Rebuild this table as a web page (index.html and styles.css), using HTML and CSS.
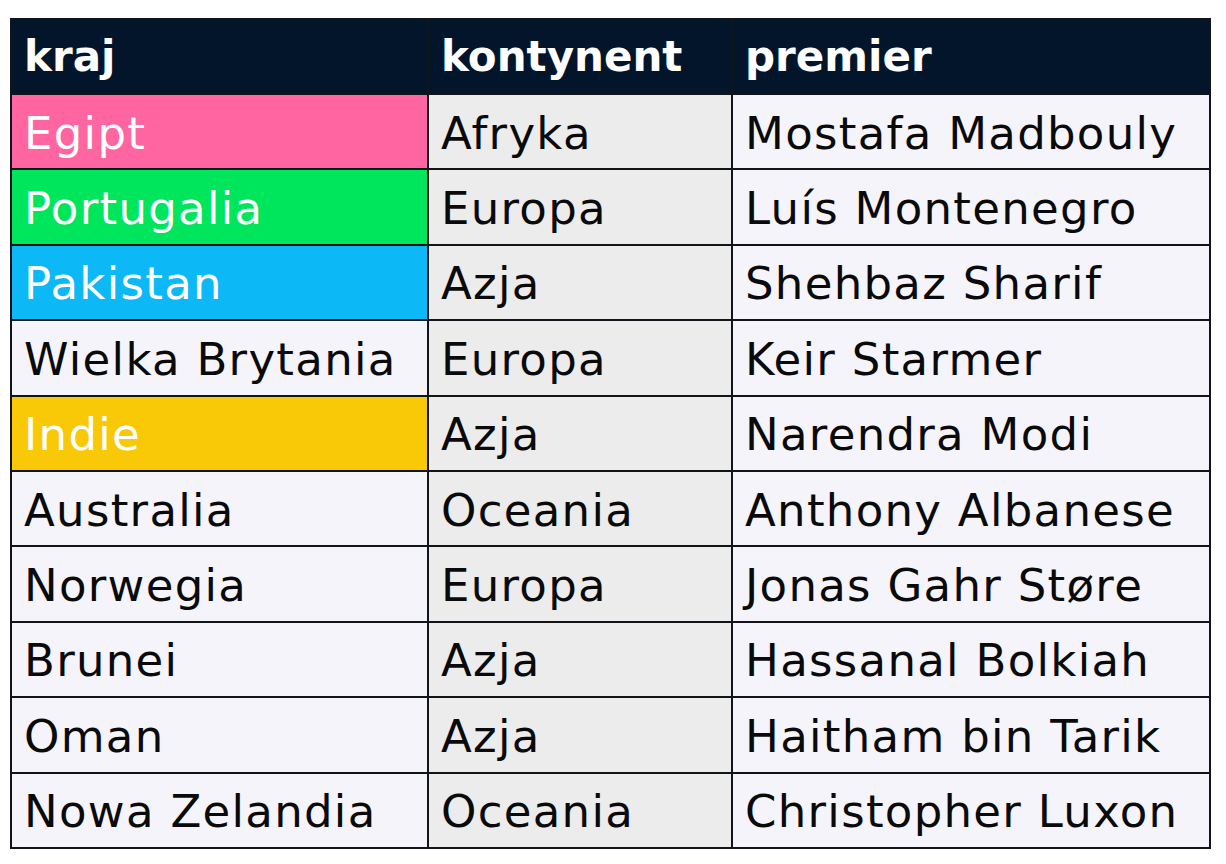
FILE: index.html
```html
<!DOCTYPE html>
<html lang="pl">
<head>
<meta charset="utf-8">
<title>Tabela</title>
<link rel="stylesheet" href="styles.css">
</head>
<body>
<table class="grid">
  <colgroup>
    <col class="c1"><col class="c2"><col class="c3">
  </colgroup>
  <thead>
    <tr><th>kraj</th><th>kontynent</th><th>premier</th></tr>
  </thead>
  <tbody>
    <tr><td class="pink">Egipt</td><td class="mid">Afryka</td><td>Mostafa Madbouly</td></tr>
    <tr><td class="green">Portugalia</td><td class="mid">Europa</td><td>Luís Montenegro</td></tr>
    <tr><td class="blue">Pakistan</td><td class="mid">Azja</td><td>Shehbaz Sharif</td></tr>
    <tr><td>Wielka Brytania</td><td class="mid">Europa</td><td>Keir Starmer</td></tr>
    <tr><td class="yellow">Indie</td><td class="mid">Azja</td><td>Narendra Modi</td></tr>
    <tr><td>Australia</td><td class="mid">Oceania</td><td>Anthony Albanese</td></tr>
    <tr><td>Norwegia</td><td class="mid">Europa</td><td>Jonas Gahr Støre</td></tr>
    <tr><td>Brunei</td><td class="mid">Azja</td><td>Hassanal Bolkiah</td></tr>
    <tr><td>Oman</td><td class="mid">Azja</td><td>Haitham bin Tarik</td></tr>
    <tr><td>Nowa Zelandia</td><td class="mid">Oceania</td><td>Christopher Luxon</td></tr>
  </tbody>
</table>
</body>
</html>
```
FILE: styles.css
```css
html, body {
  margin: 0;
  background: #ffffff;
}
body {
  padding: 18px 0 0 10px;
  font-family: "DejaVu Sans", "Noto Sans", sans-serif;
}
.grid {
  border-collapse: collapse;
  table-layout: fixed;
  width: 1199px;
}
.c1 { width: 417px; }
.c2 { width: 304px; }
.c3 { width: 478px; }
.grid th, .grid td {
  border: 2px solid #111418;
  text-align: left;
  vertical-align: middle;
  line-height: 1;
  white-space: nowrap;
  overflow: hidden;
}
.grid th {
  height: 73px;
  padding: 0 0 0 12px;
  background: #02152b;
  color: #ffffff;
  font-weight: 600;
  font-size: 42px;
}
.grid td {
  height: 70.4px;
  padding: 3px 0 0 12px;
  background: #f5f4fa;
  color: #0a0a0a;
  font-weight: 400;
  font-size: 45px;
  letter-spacing: 1.3px;
}
.grid td.mid { background: #ececec; }
.grid td.pink { background: #ff66a1; color: #fff; }
.grid td.green { background: #00e65c; color: #fff; }
.grid td.blue { background: #0cb8f6; color: #fff; }
.grid td.yellow { background: #f9c908; color: #fff; }
```
